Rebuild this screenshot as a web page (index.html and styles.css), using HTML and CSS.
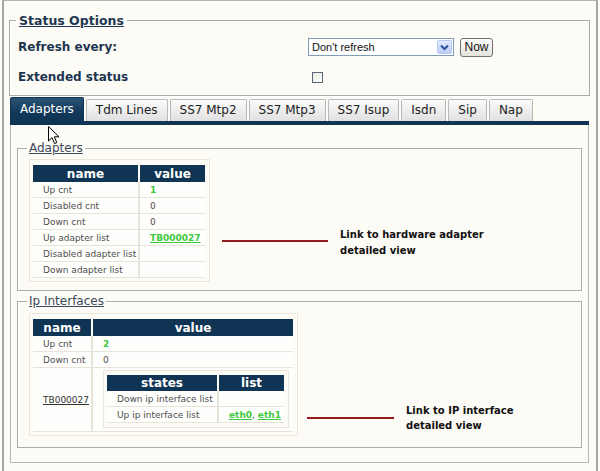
FILE: index.html
```html
<!DOCTYPE html>
<html>
<head>
<meta charset="utf-8">
<link rel="stylesheet" href="styles.css">
</head>
<body>
<div class="frame">
  <fieldset class="status">
    <legend>Status Options</legend>
    <div class="opts">
      <div class="opt-label">Refresh every:</div>
      <div class="opt-ctrl">
        <div class="select">
          <span class="sel-text">Don't refresh</span>
          <span class="sel-btn"><svg width="9" height="7" viewBox="0 0 9 7"><path d="M1 1.5 L4.5 5 L8 1.5" fill="none" stroke="#2b4d9a" stroke-width="2"/></svg></span>
        </div>
        <span class="btn">Now</span>
      </div>
      <div class="opt-label">Extended status</div>
      <div class="opt-ctrl"><span class="checkbox"></span></div>
    </div>
  </fieldset>

  <div class="tabs">
    <span class="tab active">Adapters</span>
    <span class="tab">Tdm Lines</span>
    <span class="tab">SS7 Mtp2</span>
    <span class="tab">SS7 Mtp3</span>
    <span class="tab">SS7 Isup</span>
    <span class="tab">Isdn</span>
    <span class="tab">Sip</span>
    <span class="tab">Nap</span>
  </div>

  <div class="panel">
    <fieldset class="group group-adapters">
      <legend>Adapters</legend>
      <div class="group-row">
        <div class="tbox">
          <table class="grid grid-adapters">
            <tr><th class="c-name">name</th><th class="c-val">value</th></tr>
            <tr><td class="c-name">Up cnt</td><td class="c-val"><span class="green">1</span></td></tr>
            <tr><td class="c-name">Disabled cnt</td><td class="c-val">0</td></tr>
            <tr><td class="c-name">Down cnt</td><td class="c-val">0</td></tr>
            <tr><td class="c-name">Up adapter list</td><td class="c-val"><a class="green link">TB000027</a></td></tr>
            <tr><td class="c-name">Disabled adapter list</td><td class="c-val"></td></tr>
            <tr><td class="c-name">Down adapter list</td><td class="c-val"></td></tr>
          </table>
        </div>
        <div class="note note-hw">
          <span class="note-line"></span>
          <p class="note-text">Link to hardware adapter<br>detailed view</p>
        </div>
      </div>
    </fieldset>

    <fieldset class="group group-ip">
      <legend>Ip Interfaces</legend>
      <div class="group-row">
        <div class="tbox">
          <table class="grid grid-ip">
            <tr><th class="c-name">name</th><th class="c-val">value</th></tr>
            <tr><td class="c-name">Up cnt</td><td class="c-val"><span class="green">2</span></td></tr>
            <tr><td class="c-name">Down cnt</td><td class="c-val">0</td></tr>
            <tr>
              <td class="c-name"><a class="plain-link">TB000027</a></td>
              <td class="c-val nest-cell">
                <div class="tbox nested-box">
                  <table class="grid grid-nested">
                    <tr><th class="c-name">states</th><th class="c-val">list</th></tr>
                    <tr><td class="c-name">Down ip interface list</td><td class="c-val"></td></tr>
                    <tr><td class="c-name">Up ip interface list</td><td class="c-val"><a class="green link">eth0</a>, <a class="green link">eth1</a></td></tr>
                  </table>
                </div>
              </td>
            </tr>
          </table>
        </div>
        <div class="note note-ip">
          <span class="note-line"></span>
          <p class="note-text">Link to IP interface<br>detailed view</p>
        </div>
      </div>
    </fieldset>
  </div>

  <svg class="cursor" width="12" height="19" viewBox="0 0 12 19"><path d="M0.5 0.5 L0.5 15 L4 11.6 L6.6 17.6 L8.8 16.6 L6.3 10.8 L11 10.8 Z" fill="#fff" stroke="#000" stroke-width="1" stroke-linejoin="miter"/></svg>
</div>
</body>
</html>
```

FILE: styles.css
```css
* { box-sizing: border-box; }

html, body {
  margin: 0;
  padding: 0;
  background: #fdfbf5;
}

body {
  width: 600px;
  height: 471px;
  overflow: hidden;
  font-family: "DejaVu Sans", Verdana, sans-serif;
  color: #222;
}

.frame {
  position: relative;
  margin: 0 2px;
  height: 471px;
  border: 2px solid #a6a6a6;
  border-top: 1px solid #b4b4b4;
  border-bottom: 0;
  padding: 12px 6px 0 5px;
  background: #fdfbf5;
}

/* ---------- Status options ---------- */
.status {
  margin: 0 0 3px 0;
  padding: 9px 8px 9px 8px;
  border: 1px solid #a9a9a9;
  box-shadow: inset 1px 1px 0 #fff, 1px 1px 0 #fff;
}

.status legend {
  margin-left: -2px;
  padding: 0 3px;
  font-size: 12.5px;
  line-height: 15px;
  font-weight: bold;
  color: #1d3752;
  text-decoration: underline;
}

.opts {
  display: grid;
  grid-template-columns: 290px 1fr;
  grid-template-rows: 20px 18px;
  row-gap: 11px;
  align-items: center;
}

.opt-label {
  font-size: 12px;
  font-weight: bold;
  color: #1c3550;
}

.opt-ctrl {
  display: flex;
  align-items: center;
}

.select {
  width: 146px;
  height: 18px;
  border: 1px solid #7f9db9;
  background: #fff;
  display: flex;
  align-items: center;
  justify-content: space-between;
  padding: 0 1px 0 3px;
  font-family: "Liberation Sans", Arial, sans-serif;
  font-size: 11px;
  color: #111;
}

.sel-btn {
  width: 15px;
  height: 14px;
  border: 1px solid #b7c9f2;
  border-radius: 2px;
  background: linear-gradient(#e2ebfe, #bccdf7);
  display: flex;
  align-items: center;
  justify-content: center;
}

.btn {
  margin-left: 6px;
  width: 33px;
  height: 19px;
  border: 1px solid #6f6f6f;
  border-radius: 3px;
  background: linear-gradient(#fdfdfc, #e4e3dc);
  font-family: "Liberation Sans", Arial, sans-serif;
  font-size: 12px;
  color: #111;
  display: flex;
  align-items: center;
  justify-content: center;
}

.checkbox {
  margin-left: 4px;
  width: 11px;
  height: 11px;
  border: 1px solid #5a6576;
  background: linear-gradient(135deg, #e8e8e4, #fff);
}

/* ---------- Tabs ---------- */
.tabs {
  display: flex;
  align-items: flex-end;
  gap: 2px;
  margin: 0 1px;
  height: 26px;
  border-bottom: 4px solid #0f3454;
}

.tab {
  height: 22px;
  padding: 0 9px;
  border: 1px solid #b9b9b9;
  border-bottom: 0;
  border-radius: 2px 2px 0 0;
  background: linear-gradient(#fbfbfb, #e0e0e0);
  font-size: 12px;
  line-height: 21px;
  color: #222;
  white-space: nowrap;
}

.tab.active {
  height: 24px;
  line-height: 23px;
  border-color: #0f3454;
  background: linear-gradient(#2b5475, #12395a 60%, #0f3454);
  color: #fff;
}

/* ---------- Panel ---------- */
.panel {
  margin: 0 1px;
  height: 338px;
  border: 1px solid #b7b7b7;
  border-top: 0;
  padding: 16px 6px 0 6px;
}

.group {
  margin: 0;
  border: 1px solid #acacac;
  box-shadow: inset 1px 1px 0 #fff, 1px 1px 0 #fff;
  padding: 3px 6px 8px 11px;
}

.group + .group { margin-top: 3px; }

.group legend {
  margin-left: -2px;
  padding: 0 2px;
  font-size: 12px;
  line-height: 15px;
  color: #3b4a5a;
  text-decoration: underline;
}

.group-ip { padding-top: 4px; padding-bottom: 11px; }

.group-row {
  display: flex;
  align-items: flex-start;
}

/* ---------- Tables ---------- */
.tbox {
  border: 1px solid #ebe6da;
  padding: 5px 4px 3px 3px;
  background: #fdfbf6;
}

.grid {
  border-collapse: separate;
  border-spacing: 0;
  font-size: 9px;
  color: #4e4e4e;
}

.grid th {
  height: 17px;
  padding: 0;
  background: #0f3454;
  color: #fff;
  font-size: 12px;
  font-weight: bold;
  line-height: 16px;
  text-align: center;
}

.grid th.c-name { border-right: 1px solid #fdfbf6; }
.grid th.c-val { border-left: 1px solid #fdfbf6; }

.grid td {
  height: 16px;
  padding: 0 0 0 10px;
  background: #fefefd;
  border-bottom: 1px solid #e7e3d9;
  vertical-align: middle;
  white-space: nowrap;
}

.grid td.c-name { border-right: 1px solid #e7e3d9; }
.grid td.c-val { border-left: 1px solid #e7e3d9; }

.grid-adapters th.c-name { width: 106px; }
.grid-adapters th.c-val { width: 66px; }

.grid-ip th.c-name { width: 59px; }
.grid-ip th.c-val { width: 201px; }

.nest-cell {
  padding: 2px 4px 3px 10px !important;
}

.nested-box {
  padding: 4px 3px 4px 3px;
}

.grid-nested th { height: 16px; }
.grid-nested th.c-name { width: 111px; }
.grid-nested th.c-val { width: 66px; }

.green {
  color: #3ec83e;
  font-weight: bold;
}

.link {
  text-decoration: underline;
}

.plain-link {
  color: #333;
  text-decoration: underline;
}

/* ---------- Notes ---------- */
.note {
  display: flex;
  align-items: flex-start;
}

.note-line {
  display: block;
  height: 2px;
  background: #951a1e;
}

.note-text {
  margin: 0;
  font-size: 10px;
  font-weight: bold;
  color: #111;
}

.note-hw {
  margin-left: 12px;
  margin-top: 68px;
}
.note-hw .note-line { width: 106px; margin-top: 13px; }
.note-hw .note-text { margin-left: 12px; line-height: 16px; }

.note-ip {
  margin-left: 9px;
  margin-top: 90px;
}
.note-ip .note-line { width: 87px; margin-top: 14px; }
.note-ip .note-text { margin-left: 12px; line-height: 15px; }

/* ---------- Cursor overlay ---------- */
.cursor {
  position: absolute;
  left: 44px;
  top: 125px;
}
```
